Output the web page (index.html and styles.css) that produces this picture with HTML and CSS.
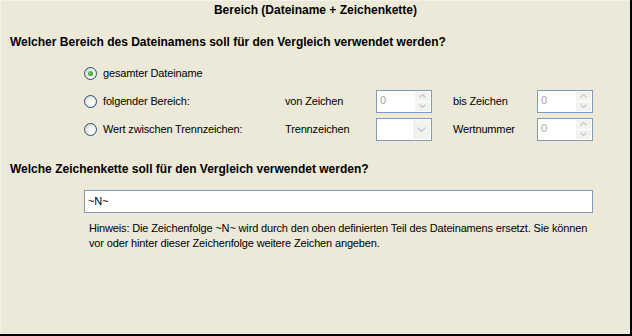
FILE: index.html
```html
<!DOCTYPE html>
<html lang="de">
<head>
    <meta charset="UTF-8">
    <title>Bereich (Dateiname + Zeichenkette)</title>
    <link rel="stylesheet" href="styles.css">
</head>
<body>
    <div class="panel">
        <div class="title">Bereich (Dateiname + Zeichenkette)</div>

        <h2 class="question">Welcher Bereich des Dateinamens soll für den Vergleich verwendet werden?</h2>

        <div class="options">
            <label class="option full"><span class="radio checked"></span>gesamter Dateiname</label>

            <label class="option"><span class="radio"></span>folgender Bereich:</label>
            <span class="field-label">von Zeichen</span>
            <div class="spin">
                <span class="value">0</span>
                <span class="spin-buttons">
                    <span class="spin-btn"><svg width="7" height="4" viewBox="0 0 7 4"><polyline points="0.5,3.5 3.5,0.5 6.5,3.5" /></svg></span>
                    <span class="spin-btn"><svg width="7" height="4" viewBox="0 0 7 4"><polyline points="0.5,0.5 3.5,3.5 6.5,0.5" /></svg></span>
                </span>
            </div>
            <span class="field-label right">bis Zeichen</span>
            <div class="spin">
                <span class="value">0</span>
                <span class="spin-buttons">
                    <span class="spin-btn"><svg width="7" height="4" viewBox="0 0 7 4"><polyline points="0.5,3.5 3.5,0.5 6.5,3.5" /></svg></span>
                    <span class="spin-btn"><svg width="7" height="4" viewBox="0 0 7 4"><polyline points="0.5,0.5 3.5,3.5 6.5,0.5" /></svg></span>
                </span>
            </div>

            <label class="option"><span class="radio"></span>Wert zwischen Trennzeichen:</label>
            <span class="field-label">Trennzeichen</span>
            <div class="spin">
                <span class="value"></span>
                <span class="combo-btn"><svg width="9" height="5" viewBox="0 0 9 5"><polyline points="0.5,0.5 4.5,4.5 8.5,0.5" /></svg></span>
            </div>
            <span class="field-label right">Wertnummer</span>
            <div class="spin">
                <span class="value">0</span>
                <span class="spin-buttons">
                    <span class="spin-btn"><svg width="7" height="4" viewBox="0 0 7 4"><polyline points="0.5,3.5 3.5,0.5 6.5,3.5" /></svg></span>
                    <span class="spin-btn"><svg width="7" height="4" viewBox="0 0 7 4"><polyline points="0.5,0.5 3.5,3.5 6.5,0.5" /></svg></span>
                </span>
            </div>
        </div>

        <h2 class="question second">Welche Zeichenkette soll für den Vergleich verwendet werden?</h2>

        <div class="text-input">~N~</div>

        <p class="hint">Hinweis: Die Zeichenfolge ~N~ wird durch den oben definierten Teil des Dateinamens ersetzt. Sie können<br>vor oder hinter dieser Zeichenfolge weitere Zeichen angeben.</p>
    </div>
</body>
</html>
```

FILE: styles.css
```css
body {
    margin: 0;
    background-color: #000;
    font-family: "Liberation Sans", Arial, sans-serif;
    font-size: 11px;
    letter-spacing: -0.15px;
    color: #000;
}
.panel {
    box-sizing: border-box;
    width: 630px;
    height: 334px;
    background-color: #ece9d8;
    border-top: 1px solid #f4f2e8;
    border-left: 1px solid #f4f2e8;
    overflow: hidden;
}
.title {
    height: 19px;
    line-height: 19px;
    text-align: center;
    font-size: 12px;
    font-weight: bold;
    letter-spacing: 0;
}
.question {
    margin: 15px 0 0 9px;
    font-size: 12px;
    line-height: 14px;
    font-weight: bold;
    letter-spacing: 0;
}
.question.second {
    margin-top: 19px;
}
.options {
    display: grid;
    grid-template-columns: 201px 91px 56px 105px 56px;
    grid-template-rows: 28px 28px 28px;
    margin: 10px 0 0 83px;
    align-items: center;
}
.option {
    display: flex;
    align-items: center;
}
.option.full {
    grid-column: 1 / -1;
}
.field-label.right {
    padding-left: 21px;
}
.radio {
    box-sizing: border-box;
    width: 13px;
    height: 13px;
    margin-right: 6px;
    border: 1px solid #1c5180;
    border-radius: 50%;
    background: radial-gradient(circle at 65% 70%, #ffffff 0, #f3f2ec 40%, #d6d3c6 100%);
    position: relative;
}
.radio.checked::after {
    content: "";
    position: absolute;
    left: 3px;
    top: 3px;
    width: 5px;
    height: 5px;
    border-radius: 50%;
    background: radial-gradient(circle at 40% 40%, #6fd46f 0, #21a121 70%);
}
.spin {
    box-sizing: border-box;
    display: flex;
    height: 23px;
    border: 1px solid #7f9db9;
    background-color: #fff;
    padding: 1px;
}
.value {
    flex: 1;
    padding: 1px 0 0 2px;
    color: #aca899;
    line-height: 14px;
}
.spin-buttons {
    display: flex;
    flex-direction: column;
    width: 15px;
    gap: 1px;
}
.spin-btn,
.combo-btn {
    flex: 1;
    display: flex;
    align-items: center;
    justify-content: center;
    background-color: #f3f2ee;
}
.combo-btn {
    flex: 0 0 17px;
}
.spin-btn svg,
.combo-btn svg {
    fill: none;
    stroke: #c6cad2;
    stroke-width: 1.4;
}
.text-input {
    box-sizing: border-box;
    width: 509px;
    height: 23px;
    margin: 14px 0 0 83px;
    padding: 3px 0 0 3px;
    border: 1px solid #7f9db9;
    background-color: #fff;
    line-height: 14px;
}
.hint {
    margin: 8px 0 0 88px;
    line-height: 15px;
    white-space: nowrap;
}
```
